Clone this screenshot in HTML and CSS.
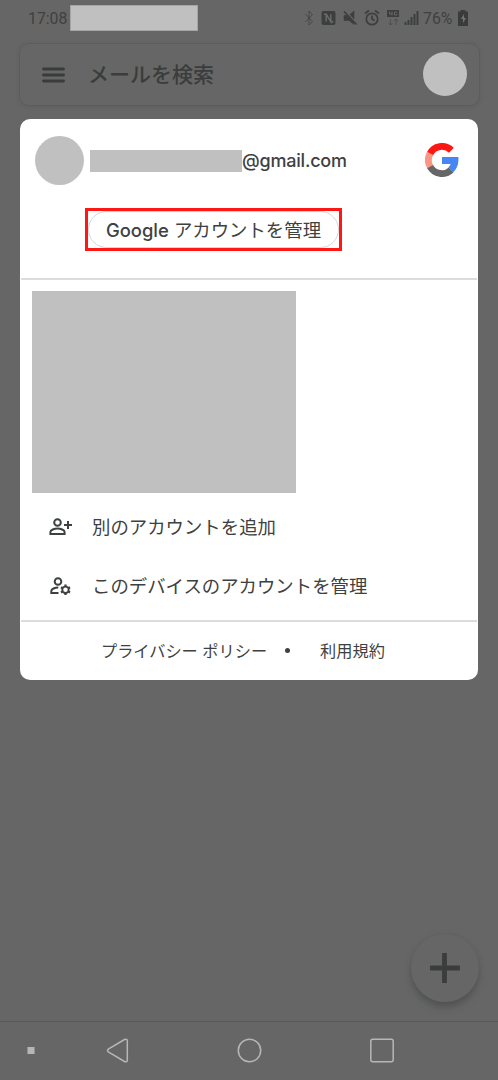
FILE: index.html
```html
<!DOCTYPE html>
<html lang="ja">
<head>
<meta charset="utf-8">
<title>Google アカウント</title>
<link rel="stylesheet" href="styles.css">
</head>
<body>
<div class="screen">
  <header class="status">
    <span class="time">17:08</span>
    <span class="status-mask"></span>
    <svg class="status-icons" width="118" height="20" viewBox="0 0 118 20" fill="none" stroke="#3c3f3e" stroke-width="1.7">
      <path d="M1.500 6l7 7.500-3.500 3.500V3l3.500 3.500-7 7.500" stroke-width="1" opacity=".75"/>
      <rect x="17.500" y="3" width="14" height="14" rx="2" fill="#3c3f3e" stroke="none"/>
      <path d="M20 6.200h2.200v7.300M22.200 6.200l4.600 7.500V6.200M26.800 13.700h2.500" stroke="#6a6c6b" stroke-width="1.400"/>
      <path d="M40 3.500l12.500 13"/><path d="M40 7.500h3l7 7v2l-5-4h-5zM46 6.500l4-3.500v8z" fill="#3c3f3e" stroke-width=".6"/>
      <circle cx="68" cy="11" r="5.700"/><path d="M68 7.500V11l2.500 1.500M61 5.500l4-3M75 5.500l-4-3"/>
      <rect x="83" y="2" width="12" height="7" fill="#3c3f3e" stroke="none"/>
      <path d="M85.500 3.500v2.500h3M88 3.500v4M93 4h-2.500v3H93V5.500" stroke="#707070" stroke-width=".8"/>
      <path d="M86.500 11v6m-2-2l2 2 2-2M92 17v-6m-2 2l2-2 2 2" stroke-width=".8" opacity=".7"/>
      <path d="M101.500 17v-3M104.500 17v-5M107.500 17V9M110.500 17V6M113.500 17V3" stroke-width="2"/>
    </svg>
    <span class="percent">76%</span>
    <svg class="battery" width="12" height="18" viewBox="0 0 12 18"><path d="M3.500 2.500V1h5v1.500H11V17H1V2.500z" fill="#393c3b"/><path d="M7 5L4 10h2v4l3-5H7z" fill="#747675"/></svg>
  </header>

  <div class="search">
    <svg class="menu" width="24" height="18" viewBox="0 0 24 18"><path d="M2.500 3h20M2.500 9h20M2.500 15h20" stroke="#393c3b" stroke-width="2.900" stroke-linecap="round"/></svg>
    <span class="search-text">メールを検索</span>
    <span class="search-avatar"></span>
  </div>

  <main class="card">
    <section class="account">
      <div class="identity">
        <span class="avatar"></span>
        <span class="name-mask"></span>
        <span class="mail">@gmail.com</span>
        <svg class="logo" width="34" height="34" viewBox="0 0 34 34" fill="none" stroke-width="6.800">
          <path d="M4.800 10.900A13.600 13.600 0 0 1 26.400 7.200" stroke="#fd1713"/>
          <path d="M5.300 23.900A13.600 13.600 0 0 1 5.100 10.400" stroke="#fd9585"/>
          <path d="M26.200 27A13.600 13.600 0 0 1 5.100 23.600" stroke="#666"/>
          <path d="M17 17.500H30A13.300 13.300 0 0 1 25.700 27" stroke="#4487f4"/>
        </svg>
      </div>
      <div class="highlight"><div class="manage"><span><b class="brand">Google</b> アカウントを管理</span></div></div>
    </section>
    <section class="accounts">
      <div class="list-mask"></div>
      <div class="row">
        <svg width="26" height="22" viewBox="0 0 26 22" fill="none" stroke="#3e4141" stroke-width="2"><circle cx="9.500" cy="6.500" r="3.300"/><path d="M2.400 18v-2c0-2 4-3.500 7.100-3.500s7.100 1.500 7.100 3.500v2zM20 5v8M16 9h8"/></svg>
        <span>別のアカウントを追加</span>
      </div>
      <div class="row device">
        <svg width="26" height="22" viewBox="0 0 26 22" fill="none" stroke="#3e4141" stroke-width="2"><circle cx="10" cy="6.500" r="3.300"/><path d="M10.500 18H3.300v-2c0-2 3.700-3.500 7-3.500"/><circle cx="17.500" cy="14.800" r="3.200" stroke-width="1.900"/><path d="M17.500 9.600v2M17.500 18v2M13 12.200l1.700 1M20.300 16.400l1.700 1M13 17.400l1.700-1M20.300 13.200l1.700-1" stroke-width="2.300"/></svg>
        <span>このデバイスのアカウントを管理</span>
      </div>
    </section>
    <footer class="links"><span>プライバシー ポリシー</span><i class="dot"></i><span>利用規約</span></footer>
  </main>

  <div class="fab"><svg width="30" height="30" viewBox="0 0 30 30"><path d="M14.500 2.500v25M2.500 15h25" stroke="#3a3d3c" stroke-width="4.800" stroke-linecap="square" stroke-linejoin="round"/></svg></div>

  <nav class="nav">
    <svg width="498" height="58" viewBox="0 0 498 58" fill="none" stroke="#b5b7b6" stroke-width="1.500">
      <rect x="27.500" y="25" width="7" height="7" fill="#b5b7b6" stroke="none"/>
      <path d="M108.300 27.200Q106.700 28.500 108.300 29.800L124.500 39.500Q127.300 40.500 127.300 38V19Q127.300 16.500 124.500 17.500Z"/>
      <circle cx="249.500" cy="28.500" r="11.200"/>
      <rect x="370.800" y="17.300" width="22.400" height="22.400" rx="2"/>
    </svg>
  </nav>
</div>
</body>
</html>
```
FILE: styles.css
```css
* { box-sizing: border-box; }
body { margin: 0; background: #666; font-family: Inter, "Noto Sans CJK JP", sans-serif; color: #3e4141; }
.screen { width: 498px; height: 1080px; display: flex; flex-direction: column; overflow: hidden; }
svg { display: block; flex: none; }
span { white-space: nowrap; }

.status { height: 36px; display: flex; align-items: center; padding-left: 28px; font: 16px Roboto, sans-serif; flex: none; }
.time { width: 42px; font-size: 15.8px; }
.status-mask { width: 128px; height: 26px; background: #c0c0c0; border: 1px solid #a5a5a5; }
.status-icons { margin-left: 106px; }
.percent { width: 33px; margin-left: 1px; font-size: 15.8px; }
.battery { margin-left: 1px; }

.search { height: 63px; width: 461px; margin: 7px 0 0 19px; border: 1px solid #5b5d5c; border-radius: 10px; box-shadow: 0 1px 4px rgba(50,53,52,.15); display: flex; align-items: center; flex: none; padding: 1px 12px 0 21px; }
.search-text { margin-left: 23px; font-size: 21px; font-weight: 500; line-height: 30px; color: #3a3d3c; }
.search-avatar { width: 44px; height: 44px; margin: 0 0 3px auto; border-radius: 50%; background: #c0c0c0; }

.card { width: 458px; height: 561px; margin: 13px 0 0 20px; border-radius: 10px; background: #fff; overflow: hidden; flex: none; }
.account { height: 161px; margin: 0 1px; border-bottom: 2px solid #dcdcdc; }
.identity { height: 66px; padding: 16px 18px 0 14px; display: flex; align-items: center; }
.avatar { width: 49px; height: 49px; border-radius: 50%; background: #c0c0c0; }
.name-mask { width: 152px; height: 22px; margin: 2px 0 0 6px; background: #c0c0c0; }
.mail { font-size: 18px; font-weight: 500; letter-spacing: -.2px; }
.logo { margin-left: auto; }
.highlight { width: 257px; height: 43px; margin: 23px 0 0 64px; border: 3px solid #fd1815; }
.manage { display: flex; align-items: center; justify-content: center; width: 251px; height: 37px; padding-bottom: 2px; border: 1px solid #d5d5d5; border-radius: 19px; font-size: 18.4px; }
.brand { font-weight: 500; }

.accounts { height: 342px; margin: 0 1px; padding: 11px 0 0 11px; border-bottom: 2px solid #dcdcdc; }
.list-mask { width: 264px; height: 202px; background: #c0c0c0; }
.row { height: 58px; margin-top: 5px; padding-left: 16px; display: flex; align-items: center; gap: 18px; font-size: 18.4px; }
.row span { padding-bottom: 2px; }
.row.device { margin-top: 1px; }
.links { height: 58px; display: flex; align-items: center; padding: 0 0 2px 81px; font-size: 16.2px; }
.dot { width: 5px; height: 5px; border-radius: 50%; background: #3e4141; margin: 0 30px 0 18px; }

.fab { width: 68px; height: 68px; margin: 254px 0 0 411px; border-radius: 50%; background: #666; box-shadow: 0 6px 7px -1px #515352, 0 1px 5px #5d5f5e; display: flex; align-items: center; justify-content: center; flex: none; }
.nav { height: 59px; margin-top: auto; border-top: 1px solid #575959; flex: none; }
```
